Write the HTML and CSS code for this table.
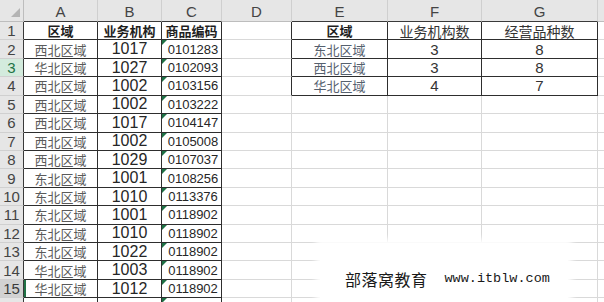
FILE: index.html
```html
<!DOCTYPE html>
<html lang="zh">
<head>
<meta charset="utf-8">
<link rel="stylesheet" href="styles.css">
</head>
<body>
<div class="sheet">
  <div class="grid">
    <div class="ch corner"><span class="tri"></span></div>
    <div class="ch tb">A</div><div class="ch tb">B</div><div class="ch tb">C</div><div class="ch">D</div><div class="ch tb">E</div><div class="ch tb">F</div><div class="ch tb">G</div><div class="ch"></div>

    <div class="rh tl">1</div>
    <div class="c t hd">区域</div><div class="c t hd">业务机构</div><div class="c t hd">商品编码</div><div class="c tr"></div><div class="c t hd">区域</div><div class="c t hn">业务机构数</div><div class="c t hn">经营品种数</div><div class="c"></div>

    <div class="rh tl">2</div>
    <div class="c t zh">西北区域</div><div class="c t num">1017</div><div class="c t code">0101283</div><div class="c tr"></div><div class="c t zh2">东北区域</div><div class="c t n2">3</div><div class="c t n2">8</div><div class="c"></div>

    <div class="rh tl sel">3</div>
    <div class="c t zh">华北区域</div><div class="c t num">1027</div><div class="c t code">0102093</div><div class="c tr"></div><div class="c t zh2">西北区域</div><div class="c t n2">3</div><div class="c t n2">8</div><div class="c"></div>

    <div class="rh tl">4</div>
    <div class="c t zh">西北区域</div><div class="c t num">1002</div><div class="c t code">0103156</div><div class="c tr"></div><div class="c t zh2">华北区域</div><div class="c t n2">4</div><div class="c t n2">7</div><div class="c"></div>

    <div class="rh tl">5</div>
    <div class="c t zh">西北区域</div><div class="c t num">1002</div><div class="c t code">0103222</div><div class="c"></div><div class="c"></div><div class="c"></div><div class="c"></div><div class="c"></div>

    <div class="rh tl">6</div>
    <div class="c t zh">西北区域</div><div class="c t num">1017</div><div class="c t code">0104147</div><div class="c"></div><div class="c"></div><div class="c"></div><div class="c"></div><div class="c"></div>

    <div class="rh tl">7</div>
    <div class="c t zh">西北区域</div><div class="c t num">1002</div><div class="c t code">0105008</div><div class="c"></div><div class="c"></div><div class="c"></div><div class="c"></div><div class="c"></div>

    <div class="rh tl">8</div>
    <div class="c t zh">西北区域</div><div class="c t num">1029</div><div class="c t code">0107037</div><div class="c"></div><div class="c"></div><div class="c"></div><div class="c"></div><div class="c"></div>

    <div class="rh tl">9</div>
    <div class="c t zh">东北区域</div><div class="c t num">1001</div><div class="c t code">0108256</div><div class="c"></div><div class="c"></div><div class="c"></div><div class="c"></div><div class="c"></div>

    <div class="rh tl">10</div>
    <div class="c t zh">东北区域</div><div class="c t num">1010</div><div class="c t code">0113376</div><div class="c"></div><div class="c"></div><div class="c"></div><div class="c"></div><div class="c"></div>

    <div class="rh tl">11</div>
    <div class="c t zh">东北区域</div><div class="c t num">1001</div><div class="c t code">0118902</div><div class="c"></div><div class="c"></div><div class="c"></div><div class="c"></div><div class="c"></div>

    <div class="rh tl">12</div>
    <div class="c t zh">东北区域</div><div class="c t num">1010</div><div class="c t code">0118902</div><div class="c"></div><div class="c"></div><div class="c"></div><div class="c"></div><div class="c"></div>

    <div class="rh tl">13</div>
    <div class="c t zh">东北区域</div><div class="c t num">1022</div><div class="c t code">0118902</div><div class="c"></div><div class="c"></div><div class="c"></div><div class="c"></div><div class="c"></div>

    <div class="rh tl">14</div>
    <div class="c t zh">华北区域</div><div class="c t num">1003</div><div class="c t code">0118902</div><div class="c"></div><div class="c"></div><div class="c"></div><div class="c"></div><div class="c"></div>

    <div class="rh tl sel2">15</div>
    <div class="c t zh act">华北区域</div><div class="c t num">1012</div><div class="c t code">0118902</div><div class="c"></div><div class="c"></div><div class="c"></div><div class="c"></div><div class="c"></div>

    <div class="rh tl"></div>
    <div class="c t"></div><div class="c t"></div><div class="c t flag"></div><div class="c"></div><div class="c"></div><div class="c"></div><div class="c"></div><div class="c"></div>
  </div>
  <div class="mark"><span class="mk-zh">部落窝教育</span><span class="mk-en">www.itblw.com</span></div>
</div>
</body>
</html>
```
FILE: styles.css
```css
html, body {
  margin: 0;
  padding: 0;
  background: #fff;
  overflow: hidden;
}
.sheet {
  position: relative;
  width: 604px;
  height: 302px;
  overflow: hidden;
  font-family: "Liberation Sans", "Noto Sans CJK SC", sans-serif;
}
.grid {
  display: grid;
  grid-template-columns: 24px 74px 64px 60px 70px 96px 94px 116px 20px;
  grid-template-rows: 22px repeat(16, 18.43px);
  width: 622px;
}
.grid > div {
  box-sizing: border-box;
  display: flex;
  align-items: center;
  justify-content: center;
  white-space: nowrap;
  overflow: hidden;
  position: relative;
}
.ch {
  background: #e6e6e6;
  border-right: 1px solid #cfcfcf;
  border-bottom: 1px solid #bdbdbd;
  color: #444;
  font-family: "Liberation Sans Narrow", "Liberation Sans", sans-serif;
  font-size: 15px;
  padding-top: 2px;
}
.ch.tb { border-bottom-color: #3a3a3a; }
.corner { border-right-color: #bdbdbd; }
.tri {
  position: absolute;
  right: 3px;
  bottom: 4px;
  width: 0;
  height: 0;
  border-left: 9px solid transparent;
  border-bottom: 9px solid #b4b4b4;
}
.rh {
  background: #e6e6e6;
  border-right: 1px solid #bdbdbd;
  border-bottom: 1px solid #d0d0d0;
  color: #444;
  font-family: "Liberation Sans Narrow", "Liberation Sans", sans-serif;
  font-size: 15px;
}
.rh.tl { border-right-color: #3a3a3a; }
.rh.sel { background: #d3ebdd; color: #217346; }
.rh.sel2 { background: #d2d2d2; color: #3a3a3a; }
.c {
  border-right: 1px solid #d9d9d9;
  border-bottom: 1px solid #d9d9d9;
}
.c.t {
  border-right-color: #2e2e2e;
  border-bottom-color: #2e2e2e;
}
.c.tr { border-right-color: #2e2e2e; }
.hd {
  font-family: "Noto Sans CJK SC", sans-serif;
  font-weight: bold;
  font-size: 13px;
  color: #1e1e1e;
}
.hn {
  font-family: "Noto Sans CJK SC", sans-serif;
  font-size: 14px;
  color: #333;
}
.zh {
  font-family: "Noto Sans CJK SC", sans-serif;
  font-size: 13px;
  color: #5a5a5a;
}
.zh2 {
  font-family: "Noto Sans CJK SC", sans-serif;
  font-size: 13px;
  color: #55606e;
}
.num {
  font-family: "Liberation Sans Narrow", "Liberation Sans", sans-serif;
  font-size: 16px;
  color: #262626;
}
.n2 {
  font-family: "Liberation Sans Narrow", "Liberation Sans", sans-serif;
  font-size: 15px;
  color: #333;
}
.code {
  font-family: "Liberation Sans Narrow", "Liberation Sans", sans-serif;
  font-size: 13px;
  color: #262626;
  padding-left: 3px;
}
.code::before,
.flag::before {
  content: "";
  position: absolute;
  left: 0;
  top: 0;
  width: 0;
  height: 0;
  border-top: 5px solid #1e7145;
  border-right: 5px solid transparent;
}
.act::before {
  content: "";
  position: absolute;
  left: 0;
  top: 0;
  bottom: 0;
  width: 2px;
  background: #217346;
}
.mark {
  position: absolute;
  left: 320px;
  top: 243px;
  width: 248px;
  height: 70px;
  background: #fff;
  box-shadow: 0 0 6px 4px #fff;
  display: flex;
  align-items: flex-start;
  padding-top: 26px;
  padding-left: 25px;
  box-sizing: border-box;
  color: #1a1a1a;
}
.mk-zh {
  font-family: "Noto Sans CJK SC", sans-serif;
  font-size: 16px;
  line-height: 20px;
  letter-spacing: 0.5px;
}
.mk-en {
  font-family: "Liberation Mono", monospace;
  font-size: 13.5px;
  line-height: 20px;
  margin-left: 17px;
}
```
